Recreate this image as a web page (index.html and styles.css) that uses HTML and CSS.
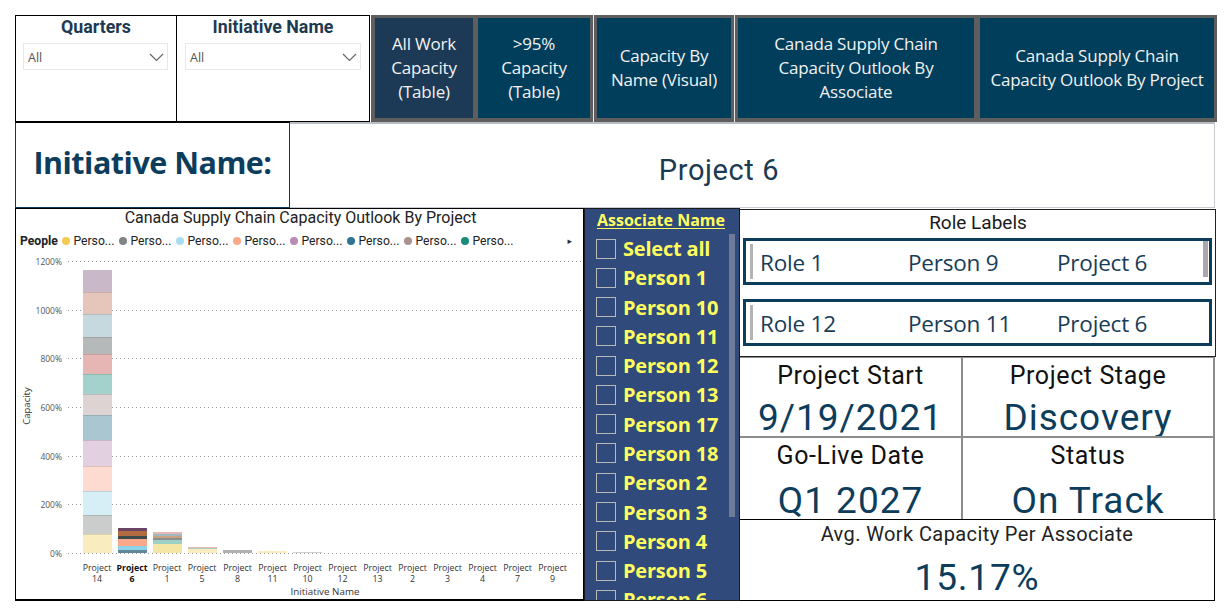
FILE: index.html
```html
<!DOCTYPE html>
<html>
<head>
<meta charset="utf-8">
<link rel="stylesheet" href="styles.css">
</head>
<body>
<div class="page">
  <div class="row1">
    <div class="slicers">
      <div class="slicer q">
        <div class="sl-title">Quarters</div>
        <div class="dropdown"><span>All</span><svg width="15" height="9" viewBox="0 0 15 9"><polyline points="1,1 7.5,7.5 14,1" fill="none" stroke="#666" stroke-width="1.2"/></svg></div>
      </div>
      <div class="slicer n">
        <div class="sl-title">Initiative Name</div>
        <div class="dropdown"><span>All</span><svg width="15" height="9" viewBox="0 0 15 9"><polyline points="1,1 7.5,7.5 14,1" fill="none" stroke="#666" stroke-width="1.2"/></svg></div>
      </div>
    </div>
    <div class="buttons">
      <div class="btn b1 sel">All Work<br>Capacity<br>(Table)</div>
      <div class="btn b2">&gt;95%<br>Capacity<br>(Table)</div>
      <div class="sep"></div>
      <div class="btn b3">Capacity By<br>Name (Visual)</div>
      <div class="sep"></div>
      <div class="btn b4">Canada Supply Chain<br>Capacity Outlook By<br>Associate</div>
      <div class="btn b5">Canada Supply Chain<br>Capacity Outlook By Project</div>
    </div>
  </div>
  <div class="row2">
    <div class="init-label">Initiative Name:</div>
    <div class="init-value">Project 6</div>
  </div>
  <div class="row3">
    <div class="chart">
      <div class="chart-title">Canada Supply Chain Capacity Outlook By Project</div>
      <div class="legend">
        <span class="lg-head">People</span>
        <span class="lg-item"><i style="background:#f2ca52"></i>Perso...</span>
        <span class="lg-item"><i style="background:#7f8587"></i>Perso...</span>
        <span class="lg-item"><i style="background:#a9dcee"></i>Perso...</span>
        <span class="lg-item"><i style="background:#f8a988"></i>Perso...</span>
        <span class="lg-item"><i style="background:#b98ab6"></i>Perso...</span>
        <span class="lg-item"><i style="background:#2f7490"></i>Perso...</span>
        <span class="lg-item"><i style="background:#a99290"></i>Perso...</span>
        <span class="lg-item"><i style="background:#1c8b7c"></i>Perso...</span>
        <span class="lg-arrow">&#9656;</span>
      </div>
      <svg class="plot" width="567" height="346" viewBox="16 252 567 346">
        <g class="grid" stroke="#9a9a9a" stroke-width="1" stroke-dasharray="1 3">
          <line x1="68" y1="260.5" x2="581" y2="260.5"/>
          <line x1="68" y1="309.5" x2="581" y2="309.5"/>
          <line x1="68" y1="357.5" x2="581" y2="357.5"/>
          <line x1="68" y1="406.5" x2="581" y2="406.5"/>
          <line x1="68" y1="455.5" x2="581" y2="455.5"/>
          <line x1="68" y1="503.5" x2="581" y2="503.5"/>
          <line x1="68" y1="552.5" x2="581" y2="552.5"/>
        </g>
        <g class="ylab" font-size="8.5" fill="#555" text-anchor="end">
          <text x="62" y="263.5">1200%</text>
          <text x="62" y="312.5">1000%</text>
          <text x="62" y="360.5">800%</text>
          <text x="62" y="409.5">600%</text>
          <text x="62" y="458.5">400%</text>
          <text x="62" y="506.5">200%</text>
          <text x="62" y="555.5">0%</text>
        </g>
        <text class="ytitle" transform="translate(30 405) rotate(-90)" text-anchor="middle" font-size="9.5" fill="#333">Capacity</text>
        <g class="bars">
          <rect x="83" y="533" width="29" height="19" fill="#f9edc0"/>
          <rect x="83" y="514" width="29" height="19" fill="#cbcdcd"/>
          <rect x="83" y="490" width="29" height="24" fill="#d6eff7"/>
          <rect x="83" y="465" width="29" height="25" fill="#fddbd0"/>
          <rect x="83" y="439" width="29" height="26" fill="#e2d0e0"/>
          <rect x="83" y="414" width="29" height="25" fill="#a9c6d1"/>
          <rect x="83" y="393" width="29" height="21" fill="#dcd3d2"/>
          <rect x="83" y="373" width="29" height="20" fill="#a2d2cb"/>
          <rect x="83" y="353" width="29" height="20" fill="#e6b6b4"/>
          <rect x="83" y="336" width="29" height="17" fill="#b5b9b9"/>
          <rect x="83" y="313" width="29" height="23" fill="#c5d9df"/>
          <rect x="83" y="291" width="29" height="22" fill="#e6c6bb"/>
          <rect x="83" y="269" width="29" height="22" fill="#c9b8c8"/>
          <g fill="#000" fill-opacity="0.12">
            <rect x="83" y="533" width="29" height="1"/><rect x="83" y="514" width="29" height="1"/>
            <rect x="83" y="490" width="29" height="1"/><rect x="83" y="465" width="29" height="1"/>
            <rect x="83" y="439" width="29" height="1"/><rect x="83" y="414" width="29" height="1"/>
            <rect x="83" y="393" width="29" height="1"/><rect x="83" y="373" width="29" height="1"/>
            <rect x="83" y="353" width="29" height="1"/><rect x="83" y="336" width="29" height="1"/>
            <rect x="83" y="313" width="29" height="1"/><rect x="83" y="291" width="29" height="1"/>
          </g>
          <rect x="118" y="549" width="29" height="3" fill="#5f8699"/>
          <rect x="118" y="545" width="29" height="4" fill="#8fd3ea"/>
          <rect x="118" y="538" width="29" height="7" fill="#f9a88a"/>
          <rect x="118" y="535" width="29" height="3" fill="#3e4b4b"/>
          <rect x="118" y="530" width="29" height="5" fill="#b36b42"/>
          <rect x="118" y="527" width="29" height="3" fill="#6b4565"/>
          <rect x="153" y="543" width="29" height="9" fill="#f6e6a6"/>
          <rect x="153" y="539" width="29" height="4" fill="#9ed0c5"/>
          <rect x="153" y="537" width="29" height="2" fill="#8a9090"/>
          <rect x="153" y="535" width="29" height="2" fill="#c9a27f"/>
          <rect x="153" y="533" width="29" height="2" fill="#9fb8c4"/>
          <rect x="153" y="531" width="29" height="2" fill="#e3b9b3"/>
          <rect x="188" y="548" width="29" height="4" fill="#f9edc0"/>
          <rect x="188" y="547" width="29" height="1" fill="#a8d3c4"/>
          <rect x="188" y="546" width="29" height="1" fill="#e6b6b4"/>
          <rect x="223" y="549" width="29" height="3" fill="#b0b0b0"/>
          <rect x="258" y="550" width="29" height="2" fill="#f9edc0"/>
          <rect x="293" y="551" width="29" height="1" fill="#cfcfcf"/>
        </g>
        <g class="xlab" font-size="8.8" fill="#333" text-anchor="middle">
          <text x="97" y="570">Project</text><text x="97" y="581">14</text>
          <text x="132" y="570" font-weight="bold" fill="#111">Project</text><text x="132" y="581" font-weight="bold" fill="#111">6</text>
          <text x="167" y="570">Project</text><text x="167" y="581">1</text>
          <text x="202" y="570">Project</text><text x="202" y="581">5</text>
          <text x="237.5" y="570">Project</text><text x="237.5" y="581">8</text>
          <text x="272.5" y="570">Project</text><text x="272.5" y="581">11</text>
          <text x="307.5" y="570">Project</text><text x="307.5" y="581">10</text>
          <text x="342.5" y="570">Project</text><text x="342.5" y="581">12</text>
          <text x="377.5" y="570">Project</text><text x="377.5" y="581">13</text>
          <text x="412.5" y="570">Project</text><text x="412.5" y="581">2</text>
          <text x="447.5" y="570">Project</text><text x="447.5" y="581">3</text>
          <text x="482.5" y="570">Project</text><text x="482.5" y="581">4</text>
          <text x="517.5" y="570">Project</text><text x="517.5" y="581">7</text>
          <text x="552.5" y="570">Project</text><text x="552.5" y="581">9</text>
        </g>
        <text x="325" y="594" text-anchor="middle" font-size="9.8" fill="#333">Initiative Name</text>
      </svg>
    </div>
    <div class="assoc">
      <div class="as-title">Associate Name</div>
      <div class="as-list">
        <div class="as-item"><span class="cb"></span>Select all</div>
        <div class="as-item"><span class="cb"></span>Person 1</div>
        <div class="as-item"><span class="cb"></span>Person 10</div>
        <div class="as-item"><span class="cb"></span>Person 11</div>
        <div class="as-item"><span class="cb"></span>Person 12</div>
        <div class="as-item"><span class="cb"></span>Person 13</div>
        <div class="as-item"><span class="cb"></span>Person 17</div>
        <div class="as-item"><span class="cb"></span>Person 18</div>
        <div class="as-item"><span class="cb"></span>Person 2</div>
        <div class="as-item"><span class="cb"></span>Person 3</div>
        <div class="as-item"><span class="cb"></span>Person 4</div>
        <div class="as-item"><span class="cb"></span>Person 5</div>
        <div class="as-item"><span class="cb"></span>Person 6</div>
      </div>
      <div class="as-scroll"></div>
    </div>
    <div class="rightcol">
      <div class="roles">
        <div class="roles-title">Role Labels</div>
        <div class="role-card">
          <span class="rc-bar"></span>
          <span>Role 1</span><span>Person 9</span><span>Project 6</span>
          <span class="rc-scroll"></span>
        </div>
        <div class="role-card">
          <span class="rc-bar"></span>
          <span>Role 12</span><span>Person 11</span><span>Project 6</span>
        </div>
      </div>
      <div class="kpis">
        <div class="kpi k1"><div class="k-label">Project Start</div><div class="k-value">9/19/2021</div></div>
        <div class="kpi k2"><div class="k-label">Project Stage</div><div class="k-value">Discovery</div></div>
        <div class="kpi k3"><div class="k-label">Go-Live Date</div><div class="k-value">Q1 2027</div></div>
        <div class="kpi k4"><div class="k-label">Status</div><div class="k-value">On Track</div></div>
      </div>
      <div class="avg">
        <div class="avg-label">Avg. Work Capacity Per Associate</div>
        <div class="avg-value">15.17%</div>
      </div>
    </div>
  </div>
</div>
</body>
</html>
```
FILE: styles.css
```css
* { box-sizing: border-box; }
html, body { margin: 0; padding: 0; }
body {
  width: 1229px;
  height: 615px;
  overflow: hidden;
  background: #fff;
  font-family: "Roboto", "DejaVu Sans", sans-serif;
  color: #222;
}
.page {
  padding: 15px 0 0 15px;
  display: flex;
  flex-direction: column;
}

/* Row 1 */
.row1 { display: flex; height: 107px; }
.slicers {
  width: 355px;
  height: 107px;
  border: 1px solid #000;
  display: flex;
}
.slicer { display: flex; flex-direction: column; }
.slicer.q { width: 161px; border-right: 1px solid #000; }
.slicer.n { flex: 1; }
.sl-title {
  text-align: center;
  font-weight: bold;
  font-size: 17.8px;
  color: #1d3a52;
  height: 27px;
  line-height: 22px;
}
.dropdown {
  margin: 0 8px 0 7px;
  height: 27px;
  border: 1px solid #e8e8e8;
  display: flex;
  align-items: center;
  justify-content: space-between;
  padding: 2px 3px 0 4px;
  font-family: "Open Sans", "Noto Sans", sans-serif;
  font-size: 12.5px;
  color: #555;
}
.slicer.n .dropdown { margin-left: 8px; }
.buttons {
  margin-left: 1px;
  width: 846px;
  height: 107px;
  background: #5e5e5e;
  display: flex;
  padding: 3px 3px 3px 3px;
}
.btn {
  height: 100px;
  background: #003e5c;
  color: #f2f2f2;
  font-family: "Open Sans", "Noto Sans", sans-serif;
  font-size: 17px;
  line-height: 24px;
  text-align: center;
  display: flex;
  align-items: center;
  justify-content: center;
  letter-spacing: -0.2px;
  white-space: nowrap;
}
.btn.sel { background: #1c3a56; }
.b1 { width: 98px; margin-left: 1px; }
.b2 { width: 112px; margin-left: 5px; }
.b3 { width: 134px; }
.b4 { width: 236px; }
.b5 { width: 234px; margin-left: 6px; }
.sep {
  width: 7px;
  display: flex;
  justify-content: center;
  margin: -3px 0;
}
.sep::before { content: ""; width: 1.5px; background: #e8e8e8; }

/* Row 2 */
.row2 { display: flex; height: 86px; margin-top: 0; }
.init-label {
  width: 275px;
  border: 1px solid #0d3b5a;
  border-top-color: #000;
  font-family: "Open Sans", "Noto Sans", sans-serif;
  font-weight: bold;
  font-size: 30.5px;
  letter-spacing: -0.5px;
  color: #0d3d5c;
  display: flex;
  align-items: center;
  justify-content: center;
  padding-bottom: 6px;
}
.init-value {
  width: 925px;
  border: 1px solid #c8ccd0;
  border-left: 0;
  border-top: 2px solid #b8bec4;
  font-size: 29px;
  color: #1b3b52;
  display: flex;
  align-items: center;
  justify-content: center;
  padding-top: 9px;
  padding-right: 66px;
  letter-spacing: 0.6px;
}

/* Row 3 */
.row3 { display: flex; height: 393px; }
.chart {
  width: 569px;
  height: 393px;
  border: 1px solid #000;
  border-bottom-width: 2px;
  display: flex;
  flex-direction: column;
  overflow: hidden;
}
.chart-title {
  height: 20px;
  text-align: center;
  font-size: 16px;
  line-height: 18px;
  color: #222;
  padding-left: 2px;
}
.legend {
  height: 24px;
  display: flex;
  align-items: center;
  font-size: 12.2px;
  color: #222;
  padding-left: 4px;
  position: relative;
}
.lg-head { font-weight: bold; margin-right: 4px; }
.lg-item { display: inline-flex; align-items: center; width: 57px; white-space: nowrap; }
.lg-item i {
  display: inline-block;
  width: 8.5px; height: 8.5px;
  border-radius: 50%;
  margin-right: 3px;
  flex: none;
}
.lg-arrow { margin-left: auto; margin-right: 11px; font-size: 9px; color: #333; }
.plot { display: block; font-family: "Open Sans", "Noto Sans", sans-serif; }

.assoc {
  position: relative;
  width: 156px;
  height: 393px;
  background: #2f4a7b;
  border: 1px solid #1a1a1a;
  overflow: hidden;
  font-family: "Open Sans", "Noto Sans", sans-serif;
}
.as-title {
  height: 25px;
  text-align: center;
  color: #ffff5e;
  font-weight: bold;
  font-size: 16px;
  text-decoration: underline;
  text-underline-offset: 2px;
  line-height: 22px;
  padding-right: 2px;
  white-space: nowrap;
}
.as-list { padding-left: 11px; }
.as-item {
  height: 29.27px;
  display: flex;
  align-items: center;
  color: #ffff5e;
  font-weight: bold;
  font-size: 20px;
  letter-spacing: -0.2px;
  white-space: nowrap;
}
.cb {
  width: 20px; height: 20px;
  border: 1.5px solid #b9b9b9;
  margin-right: 7px;
  flex: none;
}
.as-scroll {
  position: absolute;
  left: 144px;
  top: 25px;
  width: 6px;
  height: 283px;
  background: #6d7b99;
}

.rightcol {
  width: 476px;
  display: flex;
  flex-direction: column;
}
.roles {
  height: 148px;
  border: 1px solid #222;
  border-left: 0;
  padding: 0 2px 0 3px;
  margin-top: 1px;
}
.roles-title {
  text-align: center;
  font-size: 19px;
  height: 28px;
  line-height: 26px;
  color: #1a1a1a;
}
.role-card {
  position: relative;
  height: 47px;
  width: 469px;
  border: 3px solid #0c3e5c;
  display: grid;
  grid-template-columns: 148px 149px auto;
  align-items: center;
  padding-left: 14px;
  padding-top: 2px;
  font-family: "Open Sans", "Noto Sans", sans-serif;
  font-size: 22.5px;
  letter-spacing: -0.2px;
  color: #183c57;
  white-space: nowrap;
}
.role-card + .role-card { margin-top: 14px; }
.rc-bar {
  position: absolute;
  left: 4px; top: 3px;
  width: 3px; height: 35px;
  background: #b3b3b3;
}
.rc-scroll {
  position: absolute;
  right: 1px; top: 0px;
  width: 5px; height: 36px;
  background: #a9a9a9;
}
.kpis {
  height: 164px;
  display: grid;
  grid-template-columns: 223px 252px;
  grid-template-rows: 80px 82px;
  border-bottom: 1px solid #000;
}
.kpi {
  overflow: hidden;
  display: flex;
  flex-direction: column;
  align-items: center;
  border-color: #8c8c8c;
  border-style: solid;
  border-width: 0;
}
.k1 { border-right-width: 2px; border-bottom-width: 1px; border-top-width: 1px; }
.k2 { border-right-width: 2px; border-bottom-width: 1px; border-top-width: 1px; }
.k3 { border-right-width: 2px; border-top-width: 1px; }
.k4 { border-right-width: 2px; border-top-width: 1px; }
.k-label {
  font-size: 25px;
  color: #111;
  margin-top: 4px;
  line-height: 28px;
  letter-spacing: 0.6px;
  white-space: nowrap;
}
.k-value {
  font-size: 37px;
  color: #0d3d5c;
  line-height: 37px;
  margin-top: 9px;
  letter-spacing: 1px;
  white-space: nowrap;
}
.k3 .k-value, .k4 .k-value { margin-top: 12px; }
.avg {
  height: 81px;
  border: 1px solid #000;
  border-top: 0;
  border-left: 0;
  width: 475px;
  display: flex;
  flex-direction: column;
  align-items: center;
}
.avg-label { font-size: 20px; color: #222; margin-top: 3px; line-height: 22px; letter-spacing: 0.4px; white-space: nowrap; }
.avg-value { font-size: 37px; color: #0d3d5c; margin-top: 11px; line-height: 44px; letter-spacing: 0.8px; }
```
